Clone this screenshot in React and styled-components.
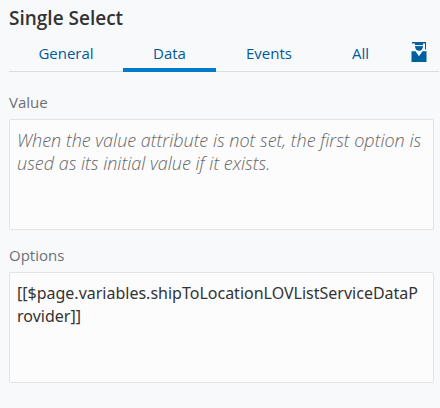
import React, { useState } from "react";
import styled, { createGlobalStyle } from "styled-components";

const GlobalStyle = createGlobalStyle`
  *, *::before, *::after { box-sizing: border-box; }
  body {
    margin: 0;
    background: #f8f9fb;
    color: #333;
    font-family: "Segoe UI", "Open Sans", "Noto Sans", sans-serif;
    font-weight: 400;
  }
`;

const Panel = styled.section`
  padding: 6px 0 24px 9px;
`;

const Title = styled.h1`
  margin: 0;
  font-size: 19px;
  line-height: 24px;
  font-weight: 600;
  color: #333;
`;

const TabBar = styled.div`
  display: grid;
  grid-template-columns: 114fr 93fr 106fr 77fr 40fr;
  margin: 6px 1px 0 0;
  border-bottom: 1px solid #d6dfe2;
`;

const Tab = styled.button`
  display: flex;
  align-items: center;
  justify-content: center;
  height: 36px;
  margin-bottom: -1px;
  padding: 2px 0 0;
  border: 0;
  border-bottom: 4px solid ${(p) => (p.$active ? "#007ac9" : "transparent")};
  background: none;
  color: #005a9e;
  font: inherit;
  font-size: 15px;
  line-height: 20px;
  cursor: pointer;
`;

const IconTab = styled(Tab)`
  padding: 0;
`;

const Field = styled.div`
  display: flex;
  flex-direction: column;
  margin: 20px 6px 0 0;

  & + & { margin-top: 15px; }
`;

const Label = styled.label`
  margin-bottom: 6px;
  font-size: 15px;
  line-height: 21px;
  color: #6b7075;
`;

const TextArea = styled.textarea`
  display: block;
  width: 100%;
  height: 111px;
  padding: 9px 10px 9px 7px;
  border: 1px solid #e2e5e7;
  border-radius: 2px;
  outline: none;
  resize: none;
  overflow: hidden;
  background: #fcfcfd;
  color: #333;
  font-family: "Segoe UI", "Noto Sans", sans-serif;
  font-size: 16px;
  line-height: 23px;

  &::placeholder {
    color: #666;
    font-family: "Segoe UI", "Open Sans", sans-serif;
    font-size: 18px;
    font-style: italic;
    font-weight: 300;
    opacity: 1;
  }
`;

function GraduateIcon() {
  return (
    <svg width="16" height="20" viewBox="0 0 16 20" fill="#005f9f" aria-hidden="true">
      <path d="M1 0h14v7.500h-1V1.600H12V4H4V1.600H1z" />
      <path d="M4 4h8C12 6.800 10.300 8.800 8 8.800S4 6.800 4 4z" />
      <path d="M0.500 9.300h4L8 14.200l3.500-4.900H15.500V20H.5z" />
      <path d="M4 3.600h8" stroke="#f8f9fb" strokeWidth="1" />
    </svg>
  );
}

const tabs = ["General", "Data", "Events", "All"];

export default function App() {
  const [active, setActive] = useState("Data");
  const [value, setValue] = useState("");
  const [options, setOptions] = useState(
    "[[$page.variables.shipToLocationLOVListServiceDataProvider]]"
  );

  return (
    <>
      <GlobalStyle />
      <Panel>
        <Title>Single Select</Title>
        <TabBar role="tablist">
          {tabs.map((name) => (
            <Tab
              key={name}
              type="button"
              role="tab"
              aria-selected={active === name}
              $active={active === name}
              onClick={() => setActive(name)}
            >
              {name}
            </Tab>
          ))}
          <IconTab type="button" aria-label="Expert mode">
            <GraduateIcon />
          </IconTab>
        </TabBar>
        <Field>
          <Label htmlFor="value">Value</Label>
          <TextArea
            id="value"
            value={value}
            onChange={(e) => setValue(e.target.value)}
            placeholder="When the value attribute is not set, the first option is used as its initial value if it exists."
          />
        </Field>
        <Field>
          <Label htmlFor="options">Options</Label>
          <TextArea
            id="options"
            spellCheck={false}
            value={options}
            onChange={(e) => setOptions(e.target.value)}
          />
        </Field>
      </Panel>
    </>
  );
}
